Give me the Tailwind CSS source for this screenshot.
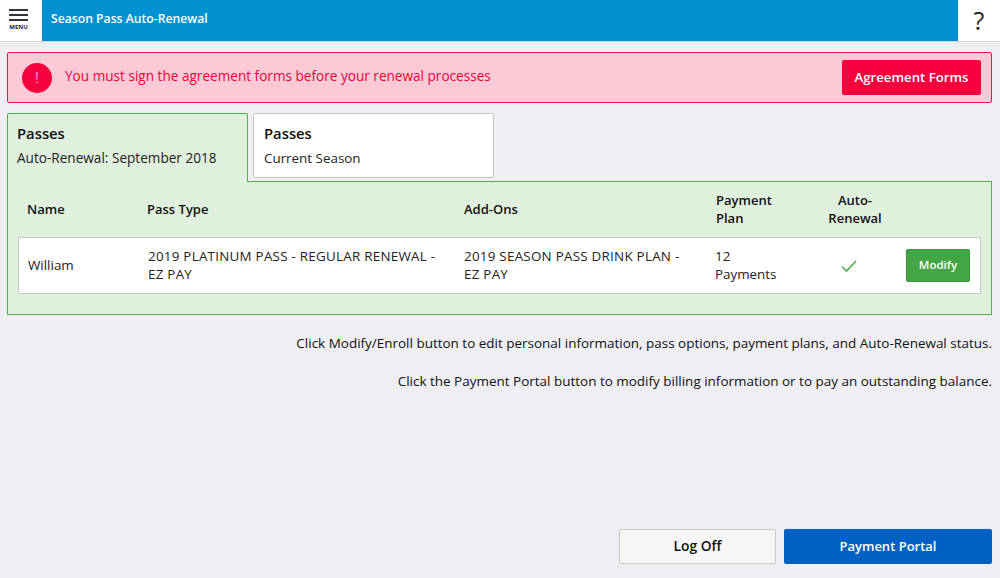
<!doctype html>
<html>
  <head>
    <meta charset="UTF-8" />
    <title>Season Pass Auto-Renewal</title>
    <script src="https://cdn.jsdelivr.net/npm/@tailwindcss/browser@4"></script>
  </head>

  <body class="bg-[#efeef3] font-['Open_Sans',sans-serif] text-[#1a1a1a]">
    <div class="h-[578px] w-[1000px] flex flex-col overflow-hidden">
      <!-- Header -->
      <header class="h-[42px] flex border-b border-[#d6d6d8] shrink-0">
        <button class="w-[42px] bg-white flex flex-col items-center pt-[9px] pr-[5px]">
          <span class="block w-[19px] h-[2px] bg-[#333]"></span>
          <span class="block w-[19px] h-[2px] bg-[#333] mt-[3px]"></span>
          <span class="block w-[19px] h-[2px] bg-[#333] mt-[3px]"></span>
          <span class="text-[6px] leading-[8px] font-bold mt-[2px] text-[#222]">MENU</span>
        </button>
        <div class="flex-1 bg-[#0091d1] flex items-center pl-[9px] pb-[3px] text-white text-[12.2px] font-semibold">Season Pass Auto-Renewal</div>
        <button class="w-[42px] bg-white text-[25px] leading-none text-[#222]">?</button>
      </header>

      <main class="flex-1 flex flex-col pl-[7px] pr-[8px] pt-[10px] pb-[14px]">
        <!-- Alert -->
        <div class="h-[51px] flex items-center justify-between bg-[#fccad7] border border-[#f5114f] rounded-[2px] pl-[14px] pr-[10px]">
          <div class="flex items-center gap-[13px]">
            <div class="w-[30px] h-[30px] rounded-full bg-[#f4003f] flex items-center justify-center text-white text-[14px] font-light">!</div>
            <p class="text-[#f4003f] text-[13.6px] font-medium pb-[2px]">You must sign the agreement forms before your renewal processes</p>
          </div>
          <button class="w-[139px] h-[35px] bg-[#f4003f] text-white text-[13.2px] font-semibold rounded-[2px]">Agreement Forms</button>
        </div>

        <!-- Tabs -->
        <div class="flex gap-[5px] mt-[10px] relative z-10">
          <div class="w-[241px] h-[69px] bg-[#dff0dd] border border-[#4fae50] border-b-0 rounded-t-[2px] pl-[9px] pt-[9px]">
            <h2 class="text-[14.8px] leading-[20px] font-semibold text-[#111]">Passes</h2>
            <p class="text-[13.6px] leading-[18px] mt-[6px] text-[#222]">Auto-Renewal: September 2018</p>
          </div>
          <div class="w-[241px] h-[65px] bg-white border border-[#c4c4c8] rounded-[2px] pl-[10px] pt-[9px]">
            <h2 class="text-[14.8px] leading-[20px] font-semibold text-[#111]">Passes</h2>
            <p class="text-[13.4px] leading-[18px] mt-[6px] text-[#222]">Current Season</p>
          </div>
        </div>

        <!-- Panel -->
        <section class="-mt-[1px] h-[134px] bg-[#dff0dd] border border-[#4fae50] px-[10px]">
          <div class="h-[55px] grid grid-cols-[120px_317px_252px_100px_78px_1fr] items-center text-[13px] leading-[17.5px] font-semibold text-[#111] pl-[9px]">
            <div>Name</div>
            <div>Pass Type</div>
            <div>Add-Ons</div>
            <div>Payment<br />Plan</div>
            <div class="text-center">Auto-<br />Renewal</div>
            <div></div>
          </div>
          <div class="h-[57px] grid grid-cols-[120px_316px_251px_100px_68px_1fr] items-center bg-white border border-[#c9c9cc] text-[13.4px] leading-[17.5px] text-[#222] pl-[9px]">
            <div>William</div>
            <div class="pr-[20px] tracking-[0.25px]">2019 PLATINUM PASS - REGULAR RENEWAL - EZ PAY</div>
            <div class="pr-[20px] tracking-[0.25px]">2019 SEASON PASS DRINK PLAN - EZ PAY</div>
            <div>12<br />Payments</div>
            <div class="flex justify-center">
              <svg class="w-[16px] h-[14px]" viewBox="0 0 16 14" fill="none" stroke="#4fae50" stroke-width="1.6"><path d="M1 7.5 L5.5 12 L15 2" /></svg>
            </div>
            <div class="flex justify-end pr-[10px]">
              <button class="w-[64px] h-[33px] bg-[#43a544] border border-[#3a963c] rounded-[2px] text-white text-[11.5px] font-semibold pb-[1px]">Modify</button>
            </div>
          </div>
        </section>

        <!-- Help text -->
        <div class="mt-[19px] text-right text-[13.47px] leading-[18px] text-[#111]">
          <p>Click Modify/Enroll button to edit personal information, pass options, payment plans, and Auto-Renewal status.</p>
          <p class="mt-[20px]">Click the Payment Portal button to modify billing information or to pay an outstanding balance.</p>
        </div>

        <!-- Footer buttons -->
        <div class="mt-auto flex justify-end gap-[8px]">
          <button class="w-[157px] h-[35px] bg-[#f6f6f7] border border-[#c9c9cc] rounded-[2px] text-[13.8px] font-semibold text-[#111]">Log Off</button>
          <button class="w-[208px] h-[35px] bg-[#0061c4] rounded-[2px] text-white text-[13px] font-semibold">Payment Portal</button>
        </div>
      </main>
    </div>
  </body>
</html>
